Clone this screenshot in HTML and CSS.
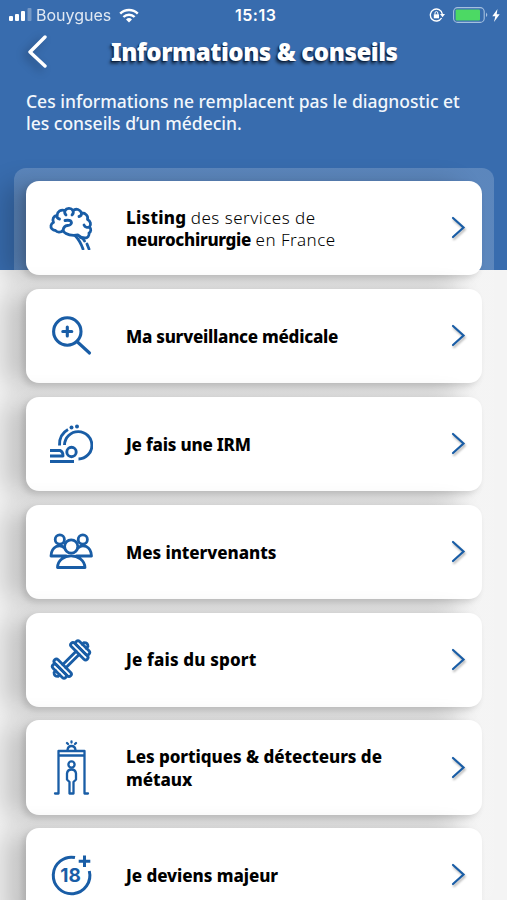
FILE: index.html
```html
<!DOCTYPE html>
<html lang="fr">
<head>
    <meta charset="UTF-8">
    <meta name="viewport" content="width=device-width, initial-scale=1.0">
    <title>Informations &amp; conseils</title>
    <link rel="stylesheet" href="styles.css">
</head>
<body>
<div class="screen">
    <div class="status">
        <svg class="signal" width="24" height="14" viewBox="0 0 24 14" fill="#fff">
            <rect x="0" y="8" width="4" height="5" rx="1"/>
            <rect x="6" y="6" width="4" height="7" rx="1"/>
            <rect x="12" y="3" width="4" height="10" rx="1"/>
            <rect x="18.5" y="0" width="4" height="13" rx="1" opacity=".3"/>
        </svg>
        <span class="carrier">Bouygues</span>
        <svg class="wifi" width="20" height="15" viewBox="0 0 20 15" fill="none" stroke="#fff" stroke-width="2.4">
            <path d="M1.2 5.6a12.6 12.6 0 0 1 17.6 0M4.4 9a8 8 0 0 1 11.2 0"/>
            <path d="M10 14.4l-3-3a4.3 4.3 0 0 1 6 0z" fill="#fff" stroke="none"/>
        </svg>
        <span class="time">15:13</span>
        <svg class="lock" width="16" height="14" viewBox="0 0 16 14" fill="none" stroke="#fff" stroke-width="1.4">
            <path d="M12.6 10A6 6 0 1 1 13.3 6"/>
            <path d="M11 6h5l-2.5 3.2z" fill="#fff" stroke="none"/>
            <rect x="4.8" y="6.3" width="5.2" height="4" fill="#fff" stroke="none"/>
            <path d="M6 6.5V5a1.4 1.4 0 0 1 2.8 0v1.5" stroke-width="1"/>
        </svg>
        <svg class="battery" width="36" height="16" viewBox="0 0 36 16">
            <rect x=".6" y=".6" width="30.6" height="14.8" rx="4" fill="none" stroke="#a5c0df" stroke-width="1.1"/>
            <rect x="2.6" y="2.6" width="24.4" height="10.8" rx="1" fill="#4cd964"/>
            <path d="M33 5.5q2.6 2.3 0 4.6z" fill="#a5c0df"/>
        </svg>
        <svg class="bolt" width="8" height="13" viewBox="0 0 8 13"><path d="M5.5 0L.3 7.3h3L2 13l5.7-7.7h-3z" fill="#fff"/></svg>
    </div>

    <div class="header">
        <svg class="back" width="24" height="36" viewBox="0 0 24 36"><path d="M20 3L5 18 20 32" fill="none" stroke="#fff" stroke-width="3.4" stroke-linecap="round" stroke-linejoin="round"/></svg>
        <h1>Informations &amp; conseils</h1>
    </div>
    <p class="intro">Ces informations ne remplacent pas le diagnostic et<br>les conseils d’un médecin.</p>

    <div class="panel">
        <a class="card">
            <svg class="icon" viewBox="0 0 44 44">
                <path d="M14 24.5c-2.5 2.5-6 2-7.5 0-3 0-5-2.5-4.5-5 .3-1.5 1.2-2.5 2.5-3-1.5-3.5 0-6.5 3.5-7 .3-4 4-6.5 8-5C17.5 2 22 1.5 24 4.5c3-2.5 7.5-1 8.5 2.5 4-.3 7 3 6 6.5 3 1.5 4 5 2 7.5 2 2 1.5 5-.5 6 .5 3-1.500 5-4 5-3 0-5-1-7-3-5 .7-9 .3-12-1.5-1.5-.8-2.5-1.8-3-3z"/>
                <path d="M8 9.5q-.3 3 2.5 3.5M16 4.5q-1 2.5 1 4.5M24 4.5q1 2.5-1 4.5M32.5 7q.3 3-2.5 3.5M16 14.5c3-.5 6-.5 6.5 2 .3 2-2 2.800-4 3-2.5.2-4 2-4.5 5M40.500 21c-2 .8-4.5.5-5.5-2"/>
                <path d="M26 29.5q5 5 8 13.500M31.500 31.500q3 1 4 3.500M38 38l2 5"/>
            </svg>
            <span class="label"><b class="listing">Listing</b> <span class="light">des services de</span><br><b class="neuro">neurochirurgie</b> <span class="light">en France</span></span>
            <svg class="chevron" viewBox="0 0 16 24"><path d="M2 2l10.5 9.5L2 21"/></svg>
        </a>
        <a class="card">
            <svg class="icon" viewBox="0 0 44 44">
                <g stroke-width="3.1"><circle cx="18.3" cy="17.5" r="13.7"/><path d="M28.5 28l12 11M18.3 13v9M13.8 17.5h9"/></g>
            </svg>
            <span class="label medical"><b>Ma surveillance médicale</b></span>
            <svg class="chevron" viewBox="0 0 16 24"><path d="M2 2l10.5 9.5L2 21"/></svg>
        </a>
        <a class="card">
            <svg class="icon mri" viewBox="0 0 44 44">
                <g stroke-width="2.9"><path d="M15.5 23A13.7 13.7 0 1 1 29.5 37"/><path d="M10.5 23.5Q10 12.5 19 7.5"/><circle cx="22.5" cy="30" r="4.7"/><path d="M1 28.5h10q3 1 3 5.5H1M1 39.5h24"/></g>
                <g fill="#195da6" stroke="none"><circle cx="22.5" cy="5.5" r="2"/><circle cx="28" cy="4.5" r="2"/></g>
            </svg>
            <span class="label irm"><b>Je fais une IRM</b></span>
            <svg class="chevron" viewBox="0 0 16 24"><path d="M2 2l10.5 9.5L2 21"/></svg>
        </a>
        <a class="card">
            <svg class="icon" viewBox="0 0 44 44">
                <circle cx="10.8" cy="9.5" r="4.6"/><circle cx="33.8" cy="9.5" r="4.6"/><circle cx="22.2" cy="16.5" r="6.6"/>
                <path d="M15.5 18C11 13.5 2.5 16 2 26H17M29 18C33.5 13.5 42 16 42.5 26H27.5M8.5 37.5c.5-15.5 26.5-15.5 27.5 0z"/>
            </svg>
            <span class="label team"><b>Mes intervenants</b></span>
            <svg class="chevron" viewBox="0 0 16 24"><path d="M2 2l10.5 9.5L2 21"/></svg>
        </a>
        <a class="card">
            <svg class="icon" viewBox="0 0 44 44">
                <g transform="translate(22 21.5) rotate(-45) scale(.94)" stroke-width="3">
                    <path d="M-10-2.3h20M-10 2.300h20"/>
                    <rect x="-15" y="-12" width="5" height="24" rx="2.5"/><rect x="10" y="-12" width="5" height="24" rx="2.5"/>
                    <rect x="-20" y="-9.5" width="5" height="19" rx="2.5"/><rect x="15" y="-9.5" width="5" height="19" rx="2.5"/>
                    <path d="M-20-3h-2.5q-3 3 0 6h2.5M20-3h2.5q3 3 0 6h-2.5"/>
                </g>
            </svg>
            <span class="label sport"><b>Je fais du sport</b></span>
            <svg class="chevron" viewBox="0 0 16 24"><path d="M2 2l10.5 9.5L2 21"/></svg>
        </a>
        <a class="card">
            <svg class="icon gate" viewBox="0 0 44 58">
                <g stroke-width="2.3"><path d="M6 54.5h3.5V12h26v42.5H39M9.5 16.5h26M18.5 11q.5-4 4-4t4 4M18 4l1 1M22.5 2.5v1M27 4l-1 1"/>
                <circle cx="22.5" cy="25.5" r="3.1"/><path d="M20.5 54.5h4V43l2.5-2.5v-6q-.5-4-4.5-4t-4.5 4v6l2.5 2.5z"/></g>
            </svg>
            <span class="label gates"><b>Les portiques &amp; détecteurs de<br>métaux</b></span>
            <svg class="chevron" viewBox="0 0 16 24"><path d="M2 2l10.5 9.5L2 21"/></svg>
        </a>
        <a class="card">
            <svg class="icon" viewBox="0 0 44 44">
                <path d="M26 4.5A18.3 18.3 0 1 0 40.3 18M35.5 2.500v11.500M29.700 8.200h11.600" stroke-width="3" stroke-linecap="butt"/>
                <text x="21.5" y="29" class="eighteen">18</text>
            </svg>
            <span class="label adult"><b>Je deviens majeur</b></span>
            <svg class="chevron" viewBox="0 0 16 24"><path d="M2 2l10.5 9.5L2 21"/></svg>
        </a>
    </div>
</div>
</body>
</html>
```
FILE: styles.css
```css
* {
    box-sizing: border-box;
}
body {
    margin: 0;
    font-family: "Noto Sans", "Open Sans", sans-serif;
    color: #000;
}
.screen {
    height: 900px;
    overflow: hidden;
    background: linear-gradient(#386cae 270px, #f4f4f4 270px);
}
svg {
    flex: none;
    display: block;
}

/* status bar */
.status {
    height: 30px;
    display: flex;
    align-items: center;
    padding-left: 9px;
    color: #fff;
    font-family: Inter, sans-serif;
}
.carrier {
    width: 76px;
    margin-left: 3px;
    font-size: 16px;
    opacity: 0.85;
}
.wifi {
    margin-left: 7px;
}
.time {
    width: 50px;
    margin-left: 96px;
    font-size: 16px;
    font-weight: 600;
    letter-spacing: 0.5px;
}
.lock {
    margin-left: 144px;
}
.battery {
    margin-left: 8px;
}
.bolt {
    margin-left: 3px;
}

.header {
    height: 44px;
    display: flex;
    align-items: center;
    padding-left: 25px;
    color: #fff;
}
.back {
    filter: drop-shadow(-4px 3px 4px rgba(0, 0, 0, 0.3));
}
h1 {
    margin: 0 0 0 62px;
    font-size: 24px;
    line-height: 36px;
    font-weight: 900;
    letter-spacing: -0.4px;
    white-space: nowrap;
    text-shadow: -1px 1px 1px #0c213f, -2px 3px 3px rgba(0, 0, 0, 0.5);
}
.intro {
    height: 94px;
    margin: 0;
    padding: 16px 0 0 26px;
    color: #f2f7fc;
    font-size: 17.5px;
    font-weight: 500;
    line-height: 22px;
    white-space: nowrap;
}

/* cards list */
.panel {
    margin: 0 13px 0 14px;
    padding: 13px 12px;
    height: 732px;
    border-radius: 12px;
    background: linear-gradient(rgba(255, 255, 255, 0.18) 102px, rgba(255, 255, 255, 0.05) 102px);
    display: flex;
    flex-direction: column;
    gap: 13.6px;
}
.card {
    flex: none;
    height: 94.3px;
    display: flex;
    align-items: center;
    padding: 0 15px 0 23px;
    border-radius: 13px;
    background: #fff;
    box-shadow: -22px 3px 26px rgba(0, 0, 0, 0.2), -3px 3px 6px rgba(0, 0, 0, 0.13);
}
.icon {
    width: 44px;
    height: 44px;
    fill: none;
    stroke: #195da6;
    stroke-width: 2.8;
    stroke-linecap: round;
    stroke-linejoin: round;
}
.mri {
    stroke-linecap: butt;
}
.gate {
    height: 58px;
}
.label {
    flex: 1;
    margin-left: 33px;
    padding-top: 2px;
    font-size: 17px;
    line-height: 22.5px;
    white-space: nowrap;
}
.label b {
    font-weight: 800;
}
.light {
    font-weight: 300;
    letter-spacing: 0.5px;
}
.listing {
    letter-spacing: 0.25px;
}
.neuro {
    letter-spacing: -0.3px;
}
.medical {
    letter-spacing: -0.25px;
}
.irm {
    letter-spacing: -0.2px;
}
.team,
.gates,
.adult {
    letter-spacing: -0.05px;
}
.sport {
    letter-spacing: 0.15px;
}
.chevron {
    width: 16px;
    height: 24px;
    fill: none;
    stroke: #195da6;
    stroke-width: 2.2;
    stroke-linecap: round;
    filter: drop-shadow(1px 2px 1px rgba(0, 0, 0, 0.3));
}
.eighteen {
    font: 700 19px Inter, sans-serif;
    text-anchor: middle;
    fill: #195da6;
    stroke: none;
}
```
